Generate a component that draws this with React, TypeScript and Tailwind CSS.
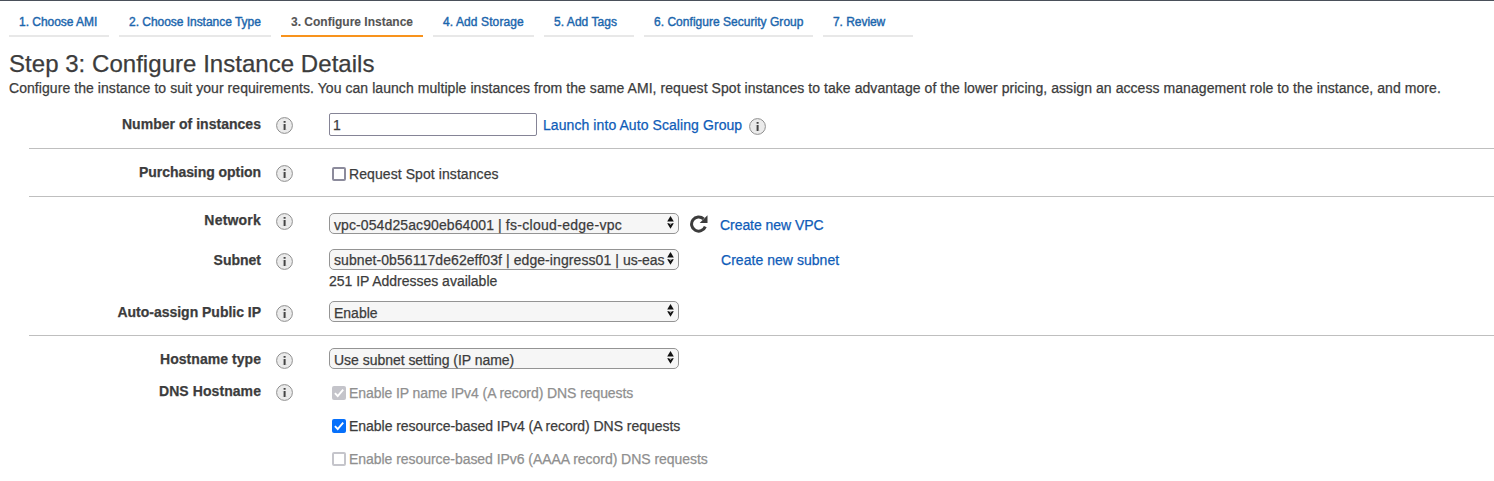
import type { ReactNode } from "react";

const tabs = [
  { label: "1. Choose AMI", size: "w-[100px] tracking-[-0.03px]" },
  { label: "2. Choose Instance Type", size: "w-[152px] tracking-[-0.033px]" },
  { label: "3. Configure Instance", size: "w-[142px]", active: true },
  { label: "4. Add Storage", size: "w-[101px] tracking-[0.1px]" },
  { label: "5. Add Tags", size: "w-[90px] tracking-[0.05px]" },
  { label: "6. Configure Security Group", size: "w-[169px] tracking-[0.028px]" },
  { label: "7. Review", size: "w-[90px] tracking-[-0.05px]" },
];

function Info({ className = "" }: { className?: string }) {
  return (
    <svg className={`size-[17px] shrink-0 ${className}`} viewBox="0 0 17 17">
      <circle cx="8.5" cy="8.5" r="7.9" fill="#ebebeb" stroke="#8f8f8f" strokeWidth="1" />
      <path d="M7.6 4h2v1.7h-2zM7.6 7h2v6h-2z" fill="#444" />
      <path d="M6.8 7h.8v.8h-.8zM6.8 12.2h.8v.8h-.8zM9.6 12.2h.8v.8h-.8z" fill="#aaa" />
    </svg>
  );
}

function Row({ label, labelClass = "", className = "", children }: { label: string; labelClass?: string; className?: string; children: ReactNode }) {
  return (
    <div className={`flex items-start ${className}`}>
      <div className={`mt-px w-[232px] text-right font-bold ${labelClass}`}>{label}</div>
      <Info className="mt-1 ml-[15px]" />
      <div className="ml-9">{children}</div>
    </div>
  );
}

function Select({ children, textClass = "" }: { children: ReactNode; textClass?: string }) {
  return (
    <button type="button" className="flex h-[21px] w-[350px] rounded-[5px] border border-[#949494] bg-[#f6f6f6] pl-1 text-left">
      <span className={`block h-[19px] w-[331px] whitespace-nowrap ${textClass}`}>{children}</span>
      <svg className="mt-[2px] ml-[2px] h-[13px] w-[7px]" viewBox="0 0 7 13">
        <path d="M3.5 0 6.8 5.4H.2z" fill="#111" />
        <path d="M3.5 12.8.2 7.2h1.9l1.4 1.6 1.4-1.6h1.9z" fill="#111" />
        <path d="M2.1 7.2h2.8L3.5 8.8z" fill="#999" />
      </svg>
    </button>
  );
}

function Check({ label, checked = false, disabled = false, textClass = "" }: { label: string; checked?: boolean; disabled?: boolean; textClass?: string }) {
  const box = checked
    ? disabled ? "bg-[#c4c4ca]" : "bg-[#0670fb]"
    : disabled ? "border-2 border-[#c5c5cb] bg-white" : "border-2 border-[#8c8b9c] bg-white";
  return (
    <label className={`flex h-5 items-start pl-[3px] ${disabled ? "text-[#8f8f8f]" : ""}`}>
      <span className={`mt-[3px] flex size-3.5 items-center justify-center rounded-[2px] ${box}`}>
        {checked && (
          <svg className="size-3.5" viewBox="0 0 14 14">
            <path d="m2.9 7.2 2.8 2.8L11.2 3.7" fill="none" stroke="#fff" strokeWidth="1.9" />
          </svg>
        )}
      </span>
      <span className={`ml-[3px] ${textClass}`}>{label}</span>
    </label>
  );
}

function Link({ children, className = "" }: { children: ReactNode; className?: string }) {
  return <a className={`text-[#0f5cb8] ${className}`}>{children}</a>;
}

export default function App() {
  return (
    <div className="h-[481px] overflow-hidden border-t border-[#4a505a] bg-white font-['Liberation_Sans',Arial,sans-serif] text-sm leading-5 whitespace-nowrap text-[#3c3c3c] [-webkit-text-stroke:0.25px]">
      <nav className="flex gap-2.5 pt-[13px] pl-[9px] text-xs leading-4 [-webkit-text-stroke:0.4px]">
        {tabs.map((t) => (
          <a
            key={t.label}
            className={`h-[23px] border-b-2 pl-2.5 ${t.size} ${t.active ? "border-[#f8931d] font-bold text-[#555] [-webkit-text-stroke:0.1px]" : "border-[#e8e8e8] text-[#1b66ad]"}`}
          >
            {t.label}
          </a>
        ))}
      </nav>
      <header className="h-[76px] pt-[13px] pl-[9px]">
        <h1 className="text-2xl leading-7 tracking-[0.038px]">Step 3: Configure Instance Details</h1>
        <p className="tracking-[0.062px]">
          Configure the instance to suit your requirements. You can launch multiple instances from the same AMI, request Spot instances to take advantage of the lower pricing, assign an access management role to the instance, and more.
        </p>
      </header>
      <main className="ml-[29px]">
        <section className="h-9 border-b border-[#bfbfbf]">
          <Row label="Number of instances" labelClass="tracking-[0.028px]">
            <div className="flex items-start">
              <input defaultValue="1" className="h-[23px] w-[208px] rounded-[2px] border border-[#858496] bg-white px-[3px] pt-px" />
              <Link className="mt-0.5 ml-1.5 tracking-[0.077px]">Launch into Auto Scaling Group</Link>
              <Info className="mt-[5px] ml-[7px]" />
            </div>
          </Row>
        </section>
        <section className="h-12 border-b border-[#bfbfbf] pt-3">
          <Row label="Purchasing option" labelClass="tracking-[-0.052px]">
            <div className="pt-[3px]">
              <Check label="Request Spot instances" textClass="tracking-[0.08px]" />
            </div>
          </Row>
        </section>
        <section className="h-[139px] border-b border-[#bfbfbf] pt-3">
          <Row label="Network" labelClass="tracking-[0.2px]" className="h-10">
            <div className="flex items-start pt-1">
              <Select textClass="pt-px">
                <span className="tracking-[0.1px]">vpc-054d25ac90eb64001 | </span>
                <span className="tracking-[0.29px]">fs-cloud-edge-vpc</span>
              </Select>
              <svg className="mt-0.5 ml-[11px] size-[18px]" viewBox="0 0 18 18">
                <path d="M15.3 11.6A7.1 7.1 0 1 1 13.6 3.9" fill="none" stroke="#3c3c3c" strokeWidth="3" />
                <path d="M17.5.3v7.8H9.7z" fill="#3c3c3c" />
              </svg>
              <Link className="mt-0.5 ml-3 tracking-[-0.055px]">Create new VPC</Link>
            </div>
          </Row>
          <Row label="Subnet" className="h-[52px]">
            <div className="flex items-start">
              <Select>
                <span className="tracking-[0.08px]">subnet-0b56117de62eff03f | edge-ingress01 | </span>
                <span className="tracking-[-0.1px]">us-eas</span>
              </Select>
              <Link className="mt-px ml-[42px] tracking-[0.04px]">Create new subnet</Link>
            </div>
            <div className="mt-px tracking-[-0.015px]">251 IP Addresses available</div>
          </Row>
          <Row label="Auto-assign Public IP" labelClass="tracking-[-0.019px]">
            <Select textClass="pt-px">Enable</Select>
          </Row>
        </section>
        <section className="pt-3">
          <Row label="Hostname type" labelClass="tracking-[0.049px]" className="h-8">
            <Select textClass="pt-px tracking-[-0.03px]">Use subnet setting (IP name)</Select>
          </Row>
          <Row label="DNS Hostname" labelClass="tracking-[0.072px]">
            <div className="flex flex-col gap-[13px] pt-[3px]">
              <Check checked disabled label="Enable IP name IPv4 (A record) DNS requests" textClass="tracking-[-0.08px]" />
              <Check checked label="Enable resource-based IPv4 (A record) DNS requests" textClass="tracking-[-0.036px]" />
              <Check disabled label="Enable resource-based IPv6 (AAAA record) DNS requests" textClass="tracking-[-0.044px]" />
            </div>
          </Row>
        </section>
      </main>
    </div>
  );
}
